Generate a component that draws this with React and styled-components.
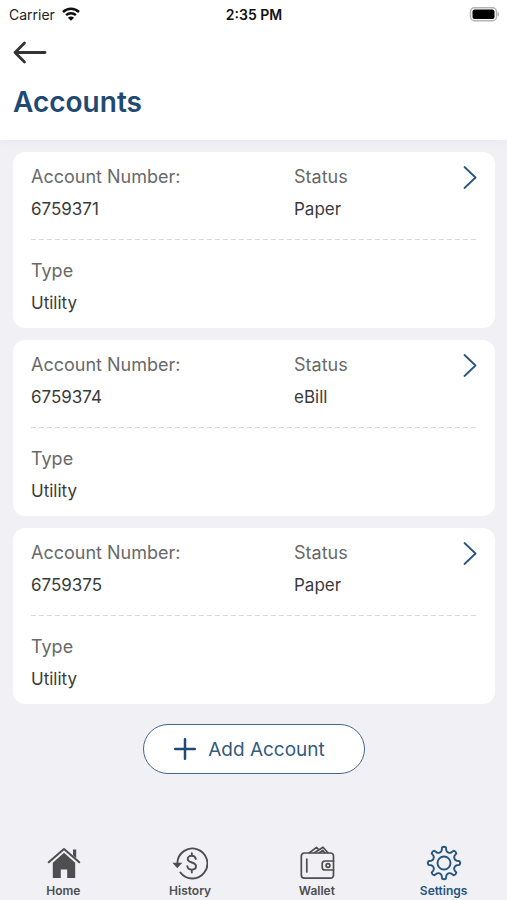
import React from "react";
import styled, { createGlobalStyle } from "styled-components";

const navy = "#1f4a73";
const ui = `"Inter", "Liberation Sans", sans-serif`;

const GlobalStyle = createGlobalStyle`
  *, *::before, *::after { box-sizing: border-box; }
  body { margin: 0; background: #f0f0f5; font-family: ${ui}; }
`;

const Screen = styled.div`
  min-height: 100vh;
  display: flex;
  flex-direction: column;
`;

const Header = styled.header`
  background: #fff;
  padding-bottom: 20px;
  box-shadow: 0 2px 10px rgba(60, 60, 70, 0.04);
`;

const StatusBar = styled.div`
  display: grid;
  grid-template-columns: 1fr auto 1fr;
  align-items: center;
  height: 28px;
  padding: 0 8px 0 9px;
  font-size: 14px;
  color: #222;
`;

const Carrier = styled.div`
  display: flex;
  align-items: center;
  gap: 7px;
`;

const Time = styled.time`
  font-size: 14px;
  font-weight: 600;
  color: #111;
`;

const BatterySlot = styled.div`
  display: flex;
  justify-content: flex-end;
`;

const BackButton = styled.button`
  display: flex;
  align-items: center;
  height: 50px;
  margin-left: 13px;
  padding: 0;
  border: 0;
  background: none;
`;

const Title = styled.h1`
  margin: 6px 13px 0;
  font-size: 28px;
  line-height: 36px;
  font-weight: 600;
  color: ${navy};
`;

const List = styled.main`
  display: flex;
  flex-direction: column;
  gap: 12px;
  padding: 12px 12px 20px 13px;
`;

const Card = styled.article`
  position: relative;
  padding: 8px 18px 8px;
  border-radius: 12px;
  background: #fff;
`;

const Fields = styled.dl`
  display: grid;
  grid-template-columns: 263fr 183fr;
  margin: 0;
  padding-bottom: ${(p) => (p.$divided ? "13px" : "0")};
`;

const Divider = styled.div`
  height: 1px;
  margin-bottom: 14px;
  background: repeating-linear-gradient(90deg, #d9d9dc 0 5px, transparent 5px 8px);
`;

const Label = styled.dt`
  font-size: 18px;
  line-height: 33px;
  color: #696969;
`;

const Value = styled.dd`
  margin: 0;
  font-size: 17px;
  line-height: 33px;
  color: #3a3a3a;
`;

const OpenButton = styled.button`
  position: absolute;
  top: 13px;
  right: 18px;
  display: flex;
  padding: 0;
  border: 0;
  background: none;
`;

const AddButton = styled.button`
  align-self: center;
  display: flex;
  align-items: center;
  justify-content: center;
  gap: 12px;
  width: 222px;
  height: 50px;
  margin-bottom: 20px;
  padding: 0 8px 0 0;
  border: 1px solid #44688b;
  border-radius: 25px;
  background: #fff;
  color: #345b80;
  font: 400 19px ${ui};
`;

const Nav = styled.nav`
  display: grid;
  grid-template-columns: repeat(4, 1fr);
  margin-top: auto;
`;

const NavLink = styled.a`
  display: flex;
  flex-direction: column;
  align-items: center;
  gap: 1px;
  color: ${(p) => (p.$active ? "#265580" : "#4e4e50")};
  font-size: 12px;
  line-height: 18px;
  font-weight: 600;
  text-decoration: none;
`;

const toothPath = (() => {
  const points = [];
  for (let i = 0; i < 8; i += 1) {
    const mid = i * 45 - 90;
    [[-10, 13], [-7, 15.7], [7, 15.7], [10, 13]].forEach(([turn, radius]) => {
      const a = ((mid + turn) * Math.PI) / 180;
      points.push([(18 + radius * Math.cos(a)).toFixed(2), (18 + radius * Math.sin(a)).toFixed(2)]);
    });
  }
  let d = `M${points[0].join(" ")}`;
  for (let i = 0; i < 8; i += 1) {
    const [, b, c, e] = points.slice(i * 4, i * 4 + 4);
    const next = points[((i + 1) * 4) % 32];
    d += `L${b.join(" ")}A3.5 3.5 0 0 1 ${c.join(" ")}L${e.join(" ")}A3.5 3.5 0 0 0 ${next.join(" ")}`;
  }
  return `${d}Z`;
})();

const Wifi = () => (
  <svg width="18" height="14" viewBox="0 0 18 14" fill="none" stroke="#111" strokeWidth="2.5" aria-hidden="true">
    <path d="M1 5C5.5 .6 12.5 .6 17 5M4.1 8.2c2.8-2.7 7-2.7 9.8 0" />
    <path d="M9 13.8 5.9 10.7c1.8-1.6 4.4-1.6 6.2 0Z" fill="#111" stroke="none" />
  </svg>
);

const Battery = () => (
  <svg width="30" height="15" viewBox="0 0 30 15" role="img" aria-label="Battery full">
    <rect x="1.5" y=".75" width="26" height="13" rx="4" fill="#fff" stroke="#b4b4b4" strokeWidth="1.5" />
    <rect x="3.5" y="2.6" width="22" height="9.3" rx="2" fill="#000" />
    <path d="M28.6 5c1.8 .4 1.8 4.1 0 4.5Z" fill="#aaa" />
  </svg>
);

const Arrow = () => (
  <svg width="34" height="24" viewBox="0 0 34 24" fill="none" stroke="#333" strokeWidth="2.8" strokeLinecap="round" strokeLinejoin="round" aria-hidden="true">
    <path d="M32 11.5H2M11.5 2 2 11.5l9.5 9.5" />
  </svg>
);

const Chevron = () => (
  <svg width="14" height="24" viewBox="0 0 14 24" fill="none" stroke="#29557f" strokeWidth="1.8" strokeLinecap="round" strokeLinejoin="round" aria-hidden="true">
    <path d="m1.5 2 11 10.5-11 10.5" />
  </svg>
);

const Plus = () => (
  <svg width="22" height="22" viewBox="0 0 22 22" stroke={navy} strokeWidth="2.5" strokeLinecap="round" aria-hidden="true">
    <path d="M11 1.2v19.6M1.2 11h19.6" />
  </svg>
);

const HomeIcon = () => (
  <svg width="36" height="36" viewBox="0 0 36 36" fill="currentColor" aria-hidden="true">
    <path d="M28 4.5h3.2v8.7L28 10.3ZM19 7.7l11.2 10.1V33h-8v-8.4h-6.4V33h-8V17.8Z" />
    <path d="M3.7 17.3 19 4l15.3 13.3" fill="none" stroke="currentColor" strokeWidth="2" strokeLinecap="round" strokeLinejoin="round" />
  </svg>
);

const HistoryIcon = () => (
  <svg width="36" height="36" viewBox="0 0 36 36" fill="none" stroke="currentColor" strokeWidth="1.9" strokeLinecap="round" aria-hidden="true">
    <path d="M5.4 18a15 15 0 1 1 3 9.5" />
    <path d="M.5 17.8h9.8L5.3 23.2Z" fill="currentColor" stroke="none" />
    <path d="M23.8 14c-.5-2.1-2-3.2-4.1-3.2-2.3 0-4 1.2-4 3.2 0 4.6 8.3 2.4 8.3 7.2 0 2-1.8 3.4-4.2 3.4s-4.1-1.2-4.5-3.4M19.8 8.2v2.6M19.8 24.6v2.8" />
  </svg>
);

const WalletIcon = () => (
  <svg width="36" height="36" viewBox="0 0 36 36" fill="none" stroke="currentColor" strokeWidth="1.7" strokeLinecap="round" strokeLinejoin="round" aria-hidden="true">
    <path d="M34.5 16v-5a3 3 0 0 0-3-3H5.3A3.2 3.2 0 0 0 2.3 11.2V30a3.2 3.2 0 0 0 3.2 3.2h26a3 3 0 0 0 3-3V25M7.8 14v13" />
    <path d="M34.5 16H26a2.8 2.8 0 0 0-2.8 2.8v3.4A2.8 2.8 0 0 0 26 25h8.5ZM10.5 7.7 17.5 2.4l2 2.2M15.5 7.7 24 2.2l5 5.5M20.5 7.7l3.2-2.3 2 2.3" />
    <circle cx="29" cy="20.5" r="1.9" />
  </svg>
);

const GearIcon = () => (
  <svg width="36" height="36" viewBox="0 0 36 36" fill="none" stroke="currentColor" strokeWidth="1.9" strokeLinejoin="round" aria-hidden="true">
    <path d={toothPath} />
    <circle cx="18" cy="18" r="6.5" />
  </svg>
);

const accounts = [
  { number: "6759371", status: "Paper", type: "Utility" },
  { number: "6759374", status: "eBill", type: "Utility" },
  { number: "6759375", status: "Paper", type: "Utility" },
];

const tabs = [
  { name: "Home", Icon: HomeIcon },
  { name: "History", Icon: HistoryIcon },
  { name: "Wallet", Icon: WalletIcon },
  { name: "Settings", Icon: GearIcon, active: true },
];

const Field = ({ label, value }) => (
  <div>
    <Label>{label}</Label>
    <Value>{value}</Value>
  </div>
);

export default function App() {
  return (
    <Screen>
      <GlobalStyle />
      <Header>
        <StatusBar>
          <Carrier>Carrier <Wifi /></Carrier>
          <Time>2:35 PM</Time>
          <BatterySlot><Battery /></BatterySlot>
        </StatusBar>
        <BackButton type="button" aria-label="Back"><Arrow /></BackButton>
        <Title>Accounts</Title>
      </Header>
      <List>
        {accounts.map((account) => (
          <Card key={account.number}>
            <Fields $divided>
              <Field label="Account Number:" value={account.number} />
              <Field label="Status" value={account.status} />
            </Fields>
            <Divider />
            <Fields>
              <Field label="Type" value={account.type} />
            </Fields>
            <OpenButton type="button" aria-label={`Open account ${account.number}`}><Chevron /></OpenButton>
          </Card>
        ))}
      </List>
      <AddButton type="button"><Plus />Add Account</AddButton>
      <Nav aria-label="Main">
        {tabs.map(({ name, Icon, active }) => (
          <NavLink key={name} href={`#${name.toLowerCase()}`} $active={active} aria-current={active ? "page" : undefined}>
            <Icon />{name}
          </NavLink>
        ))}
      </Nav>
    </Screen>
  );
}
